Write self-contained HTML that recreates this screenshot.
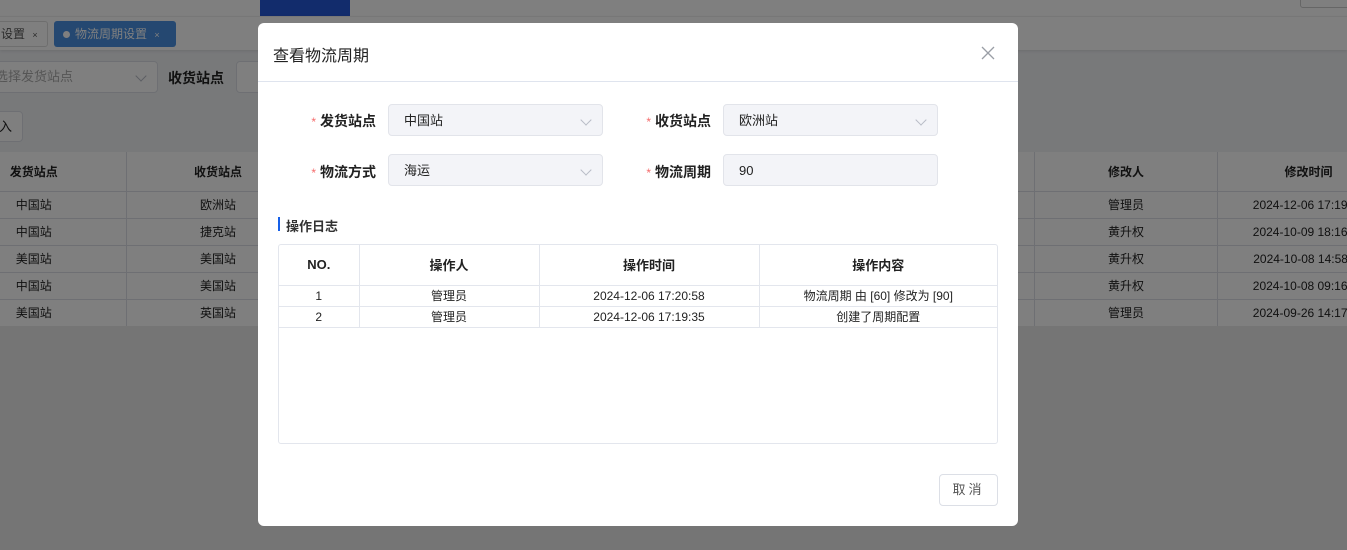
<!DOCTYPE html>
<html><head><meta charset="utf-8"><style>
*{box-sizing:border-box;margin:0;padding:0}
body{width:1347px;height:550px;overflow:hidden;position:relative;font-family:"Liberation Sans","Noto Sans CJK SC",sans-serif;font-size:13px;color:#222;background:#f0f2f5}
.abs{position:absolute}
.ov{position:absolute;inset:0;background:rgba(0,0,0,0.5)}
.dlg{position:absolute;left:258px;top:23px;width:760px;height:503px;background:#fff;border-radius:6px}
.lbl{position:absolute;font-weight:bold;font-size:14px;text-align:right;width:100px}
.lbl b{color:#f56c6c;font-weight:normal;font-size:12px;margin-right:4px}
.inp{position:absolute;width:215px;height:32px;background:#f3f4f8;border:1px solid #e2e4ea;border-radius:4px;padding-left:15px;line-height:32px;font-size:13px}
.chev{position:absolute;right:12px;top:11px;width:8px;height:8px;border-right:1px solid #b8bcc6;border-bottom:1px solid #b8bcc6;transform:rotate(45deg)}
.lt{position:absolute;left:20px;top:221px;width:720px;height:200px;border:1px solid #e3e6ed;border-radius:3px}
.lt table{border-collapse:collapse;width:100%;font-size:12px;text-align:center}
.lt td,.lt th{border-right:1px solid #e3e6ed;border-bottom:1px solid #e3e6ed}
.lt td:last-child,.lt th:last-child{border-right:none}
.bt td,.bt th{border-right:1px solid #dcdfe6;border-bottom:1px solid #dcdfe6;text-align:center;font-size:12px}
</style></head><body>
<div class="abs" style="left:0;top:0;width:1347px;height:16px;background:#fff"></div>
<div class="abs" style="left:260px;top:0;width:90px;height:16px;background:#2558d8"></div>
<div class="abs" style="left:1300px;top:-4px;width:60px;height:12px;border:1px solid #ccc;border-radius:3px"></div>
<div class="abs" style="left:0;top:16px;width:1347px;height:34px;background:#fff;border-top:1px solid #eee;box-shadow:0 1px 3px rgba(0,0,0,.1)"></div>
<div class="abs" style="left:-10px;top:21px;width:58px;height:26px;border:1px solid #ddd;border-radius:3px;font-size:12px;line-height:24px;padding-left:10px;color:#555">设置 <span style="font-size:9px;margin-left:4px">×</span></div>
<div class="abs" style="left:54px;top:21px;width:122px;height:26px;background:#4a90e2;border-radius:3px;color:#fff;font-size:12px;line-height:26px;padding-left:9px"><span style="display:inline-block;width:7px;height:7px;border-radius:50%;background:#fff;margin-right:5px"></span>物流周期设置 <span style="font-size:9px;margin-left:4px">×</span></div>
<div class="abs" style="left:-20px;top:61px;width:178px;height:32px;background:#fff;border:1px solid #dcdfe6;border-radius:4px;color:#aaa;line-height:30px;padding-left:14px">选择发货站点<i class="chev" style="right:12px;top:10px"></i></div>
<div class="abs" style="left:168px;top:68px;font-weight:bold;font-size:14px">收货站点</div>
<div class="abs" style="left:236px;top:61px;width:30px;height:32px;background:#fff;border:1px solid #dcdfe6;border-radius:4px"></div>
<div class="abs" style="left:-10px;top:111px;width:33px;height:31px;background:#fff;border:1px solid #dcdfe6;border-radius:4px;line-height:29px;padding-left:8px">入</div>
<table class="abs bt" style="left:-58px;top:152px;width:1458px;border-collapse:collapse;background:#fff">
<tr style="height:39px;font-weight:bold"><th style="width:184px">发货站点</th><th style="width:184px">收货站点</th><th></th><th style="width:183px">修改人</th><th style="width:182px">修改时间</th></tr>
<tr style="height:27px"><td>中国站</td><td>欧洲站</td><td></td><td>管理员</td><td>2024-12-06 17:19:35</td></tr>
<tr style="height:27px"><td>中国站</td><td>捷克站</td><td></td><td>黄升权</td><td>2024-10-09 18:16:20</td></tr>
<tr style="height:27px"><td>美国站</td><td>美国站</td><td></td><td>黄升权</td><td>2024-10-08 14:58:11</td></tr>
<tr style="height:27px"><td>中国站</td><td>美国站</td><td></td><td>黄升权</td><td>2024-10-08 09:16:42</td></tr>
<tr style="height:27px"><td>美国站</td><td>英国站</td><td></td><td>管理员</td><td>2024-09-26 14:17:03</td></tr>
</table>
<div class="abs" style="left:0;top:326px;width:1347px;height:224px;background:#ebebeb"></div>
<div class="ov"></div>
<div class="dlg">
<div class="abs" style="left:15px;top:19px;font-size:16px">查看物流周期</div>
<svg class="abs" style="left:722px;top:22px" width="16" height="16" viewBox="0 0 16 16"><path d="M2 2L14 14M14 2L2 14" stroke="#9a9ea6" stroke-width="1.3" fill="none"/></svg>
<div class="abs" style="left:0;top:58px;width:760px;height:1px;background:#dfe4ee"></div>
<div class="lbl" style="left:18px;top:88px"><b>*</b>发货站点</div>
<div class="inp" style="left:130px;top:81px">中国站<i class="chev"></i></div>
<div class="lbl" style="left:353px;top:88px"><b>*</b>收货站点</div>
<div class="inp" style="left:465px;top:81px">欧洲站<i class="chev"></i></div>
<div class="lbl" style="left:18px;top:139px"><b>*</b>物流方式</div>
<div class="inp" style="left:130px;top:131px">海运<i class="chev"></i></div>
<div class="lbl" style="left:353px;top:139px"><b>*</b>物流周期</div>
<div class="inp" style="left:465px;top:131px">90</div>
<div class="abs" style="left:20px;top:194px;width:2px;height:14px;background:#1660e8"></div>
<div class="abs" style="left:28px;top:193px;font-weight:bold;font-size:13px;color:#333">操作日志</div>
<div class="lt"><table>
<tr style="height:40px;font-weight:bold;font-size:13px"><th style="width:80px">NO.</th><th style="width:180px">操作人</th><th style="width:220px">操作时间</th><th>操作内容</th></tr>
<tr style="height:21px"><td>1</td><td>管理员</td><td>2024-12-06 17:20:58</td><td>物流周期 由 [60] 修改为 [90]</td></tr>
<tr style="height:21px"><td>2</td><td>管理员</td><td>2024-12-06 17:19:35</td><td>创建了周期配置</td></tr>
</table></div>
<div class="abs" style="left:681px;top:451px;width:59px;height:32px;border:1px solid #dcdfe6;border-radius:4px;text-align:center;line-height:30px;color:#555;letter-spacing:3px">取消</div>
</div>
</body></html>
